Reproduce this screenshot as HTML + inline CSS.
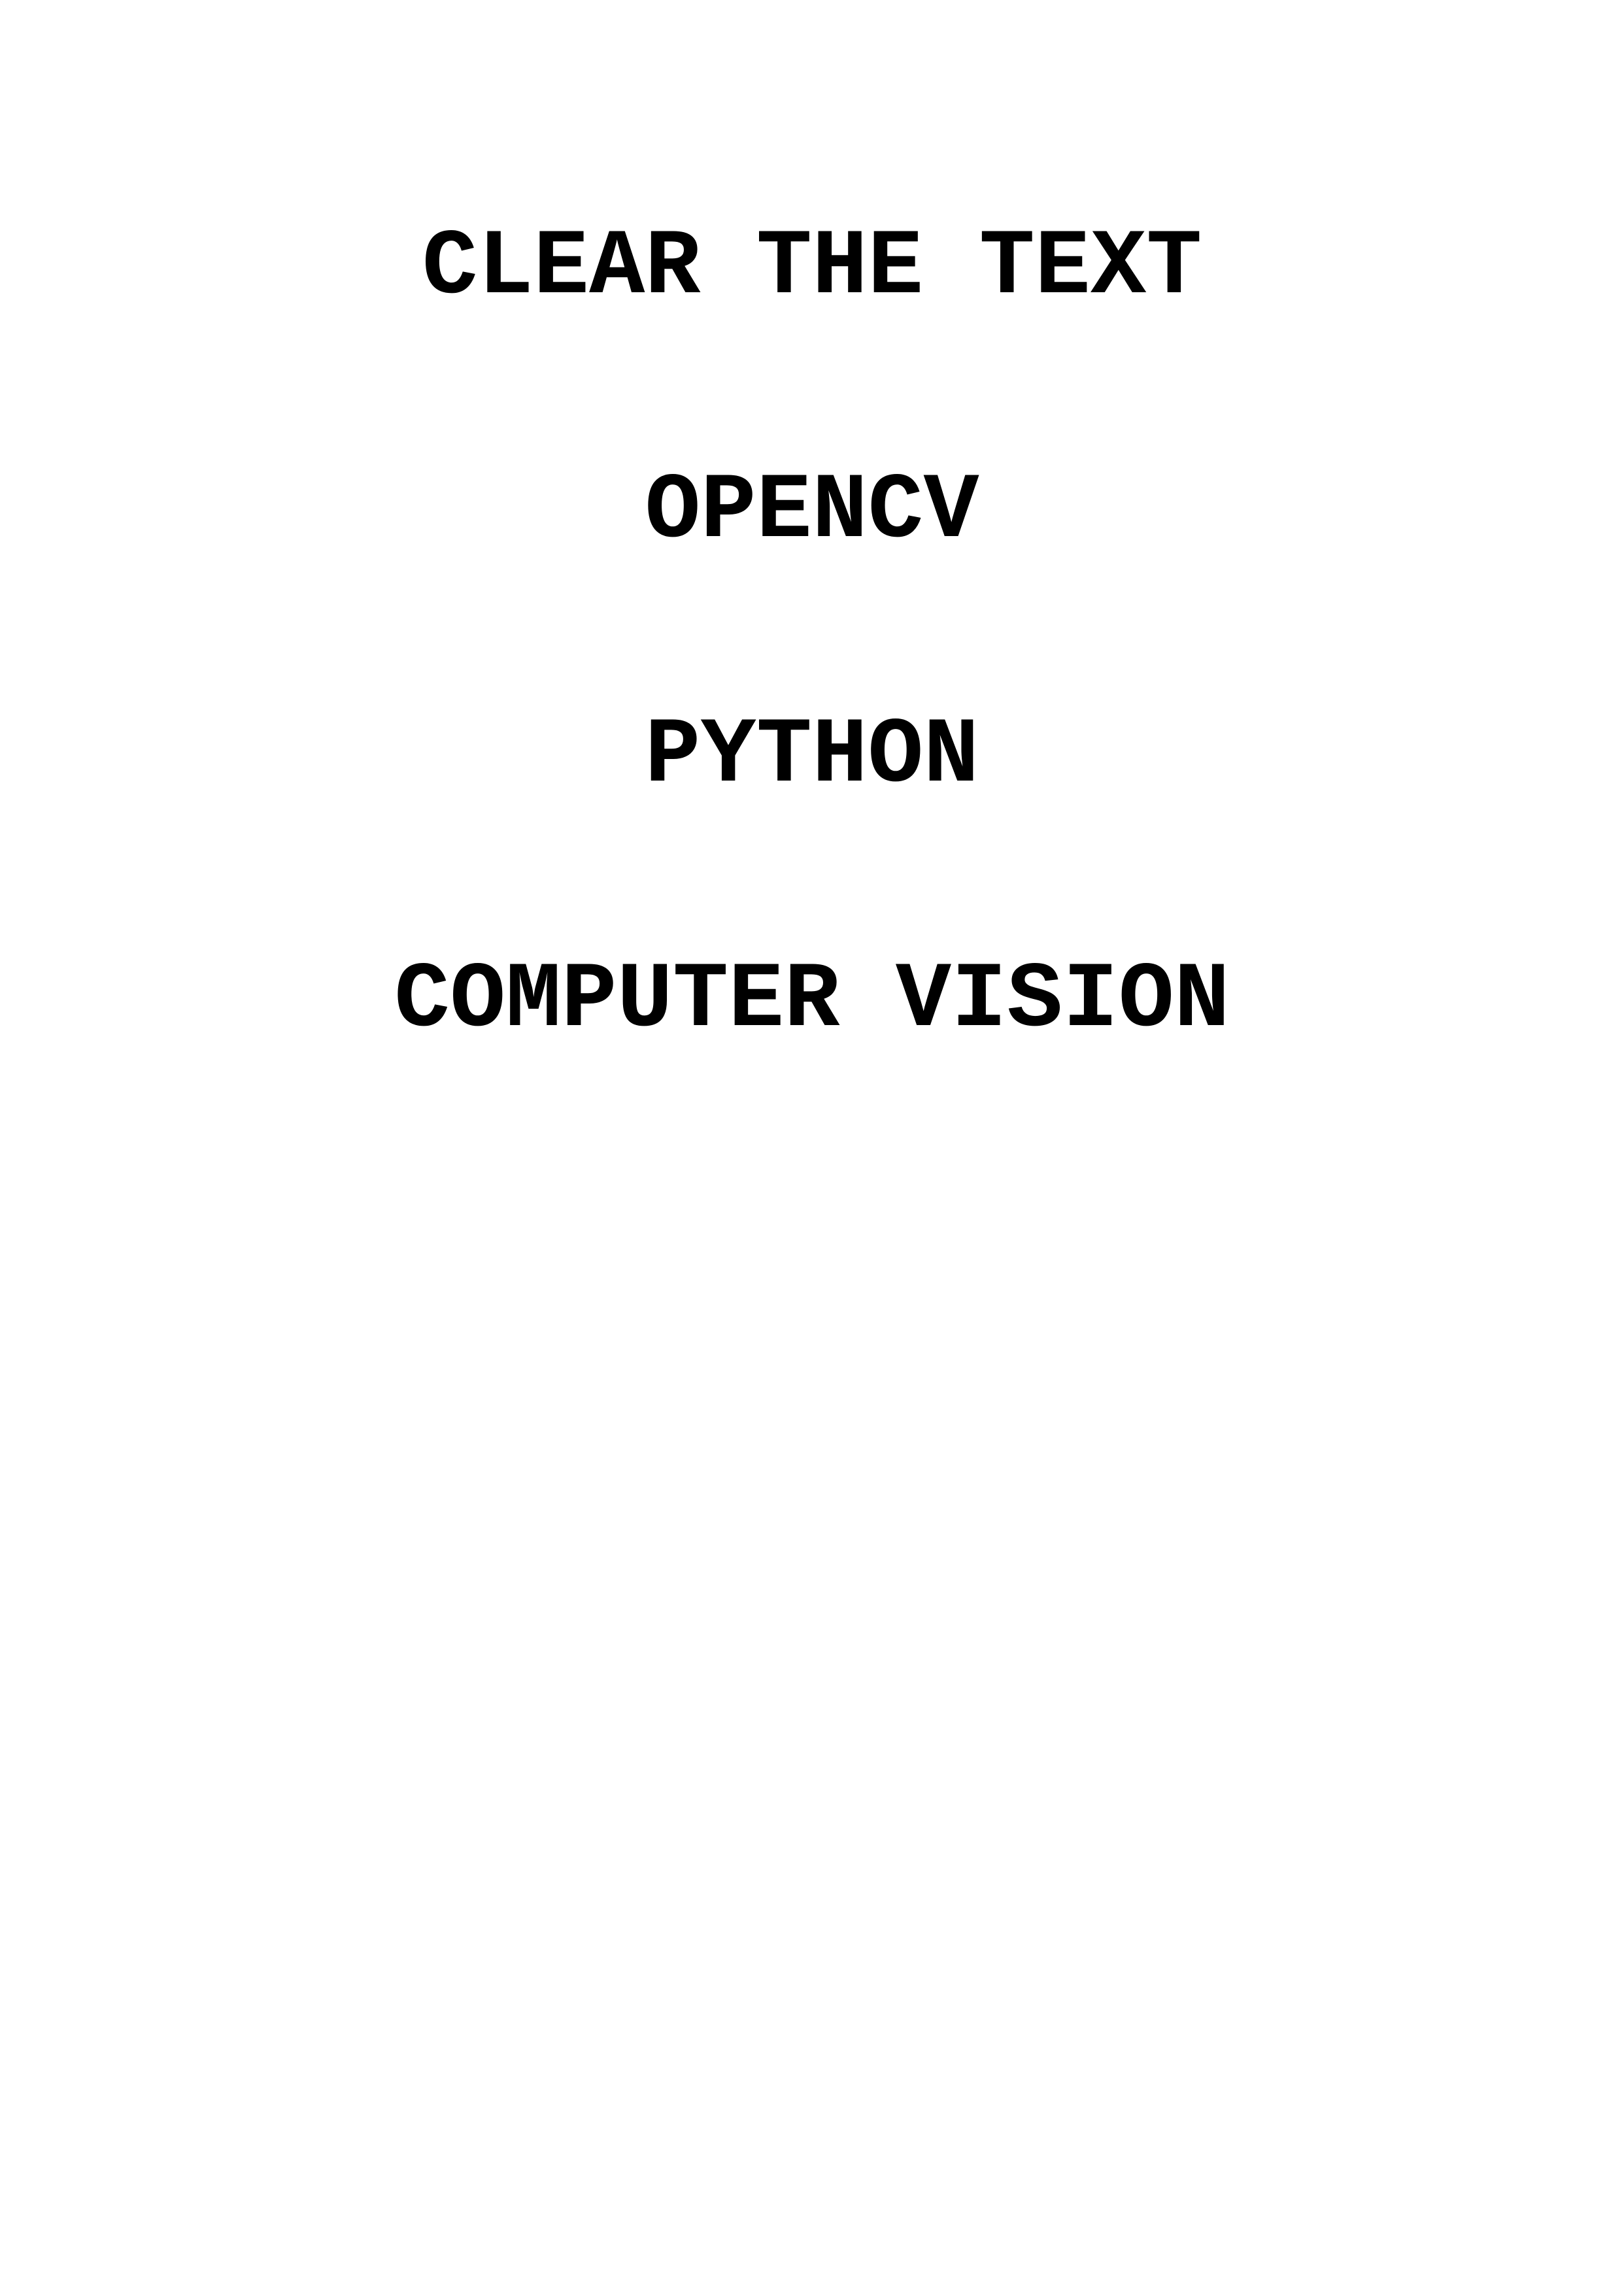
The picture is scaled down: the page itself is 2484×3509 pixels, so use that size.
<!DOCTYPE html>
<html><head><meta charset="utf-8"><style>
html,body{margin:0;padding:0;background:#fff;}
body{width:2484px;height:3509px;position:relative;overflow:hidden;}
.l{position:absolute;left:0;width:2484px;text-align:center;font-family:"Liberation Mono",monospace;font-weight:bold;font-size:142px;line-height:142px;letter-spacing:0;color:#000;white-space:pre;}
</style></head><body>
<div class="l" style="top:339px">CLEAR THE TEXT</div>
<div class="l" style="top:712px">OPENCV</div>
<div class="l" style="top:1086px">PYTHON</div>
<div class="l" style="top:1460px">COMPUTER VISION</div>
</body></html>
